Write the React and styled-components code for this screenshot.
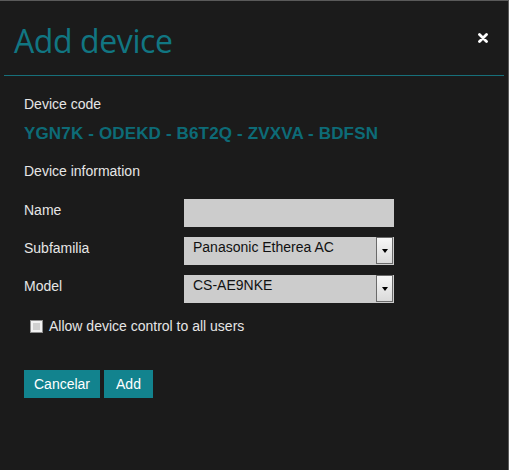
import React, { useState } from 'react'
import styled, { createGlobalStyle } from 'styled-components'

const GlobalStyle = createGlobalStyle`
    html, body {
        margin: 0;
        padding: 0;
        background: #1b1b1b;
    }
`

const Dialog = styled.div`
    box-sizing: border-box;
    width: 509px;
    height: 470px;
    background-color: #1b1b1b;
    border-top: 1px solid #5a5a5a;
    border-right: 1px solid #5a5a5a;
    font-family: "Liberation Sans", Arial, sans-serif;
    font-size: 14px;
    line-height: 20px;
    color: #e6e6e6;
`

const Header = styled.div`
    height: 74px;
    margin: 0 4px;
    padding: 0 16px 0 10px;
    display: flex;
    align-items: center;
    justify-content: space-between;
    border-bottom: 1px solid #17707a;
`

const Title = styled.h1`
    margin: 0;
    padding-top: 5px;
    font-family: "Open Sans", "Noto Sans", sans-serif;
    font-weight: 400;
    font-size: 32px;
    line-height: 40px;
    letter-spacing: -0.4px;
    color: #117682;
`

const Close = styled.button`
    width: 10px;
    height: 10px;
    padding: 0;
    border: 0;
    background: none;
    cursor: pointer;
    display: flex;

    svg {
        display: block;
    }
`

const Body = styled.div`
    padding: 18px 24px 0;
`

const SectionLabel = styled.div`
    margin-top: ${props => props.$top || 0}px;
    color: #e6e6e6;
`

const Code = styled.div`
    margin-top: 10px;
    font-size: 17px;
    font-weight: 700;
    letter-spacing: 0.15px;
    color: #0d6b77;
`

const Form = styled.div`
    margin-top: 18px;
    display: flex;
    flex-direction: column;
    gap: 10px;
`

const Row = styled.div`
    display: grid;
    grid-template-columns: 160px 210px;
    align-items: start;
`

const Label = styled.label`
    padding-top: 1px;
`

const Input = styled.input`
    box-sizing: border-box;
    width: 210px;
    height: 28px;
    margin: 0;
    padding: 0 8px;
    border: 0;
    outline: none;
    background: #cccccc;
    font-family: inherit;
    font-size: 14px;
    color: #111;
`

const Select = styled.div`
    box-sizing: border-box;
    width: 210px;
    height: 28px;
    display: flex;
    align-items: flex-start;
    background: #cccccc;
    color: #111;
    cursor: pointer;
`

const SelectValue = styled.span`
    flex: 1;
    padding-left: 9px;
    line-height: 20px;
`

const Arrow = styled.span`
    box-sizing: border-box;
    width: 17px;
    height: 27px;
    margin-right: 1px;
    display: flex;
    align-items: center;
    justify-content: center;
    border: 1px solid #6a6a6a;
    background: linear-gradient(#f7f7f7, #dadada);

    &::after {
        content: '';
        border-left: 3.5px solid transparent;
        border-right: 3.5px solid transparent;
        border-top: 4px solid #000;
    }
`

const CheckRow = styled.label`
    margin-top: 13px;
    padding-left: 6px;
    display: flex;
    align-items: center;
    gap: 6px;
    cursor: pointer;
`

const Box = styled.span`
    box-sizing: border-box;
    width: 13px;
    height: 13px;
    border: 1px solid #8e8e8e;
    background: ${props => (props.$checked ? '#117682' : '#d0d0d0')};
    box-shadow: inset 0 0 0 2px #f2f2f2;
`

const Buttons = styled.div`
    margin-top: 34px;
    display: flex;
    gap: 4px;
`

const Button = styled.button`
    height: 28px;
    padding: 0 ${props => props.$pad}px;
    border: 0;
    background-color: #12838e;
    color: #ffffff;
    font-family: "Liberation Sans", Arial, sans-serif;
    font-size: 14px;
    line-height: 28px;
    cursor: pointer;
`

const App = () => {
    const [name, setName] = useState('')
    const [shared, setShared] = useState(false)

    return (
        <>
            <GlobalStyle />
            <Dialog>
                <Header>
                    <Title>Add device</Title>
                    <Close aria-label="Close">
                        <svg width="10" height="10" viewBox="0 0 10 10">
                            <path d="M1.5 1.5 L8.5 8.5 M8.5 1.5 L1.5 8.5" stroke="#fff" strokeWidth="2.8" strokeLinecap="round" />
                        </svg>
                    </Close>
                </Header>
                <Body>
                    <SectionLabel>Device code</SectionLabel>
                    <Code>YGN7K - ODEKD - B6T2Q - ZVXVA - BDFSN</Code>
                    <SectionLabel $top={17}>Device information</SectionLabel>

                    <Form>
                        <Row>
                            <Label>Name</Label>
                            <Input value={name} onChange={e => setName(e.target.value)} />
                        </Row>
                        <Row>
                            <Label>Subfamilia</Label>
                            <Select>
                                <SelectValue>Panasonic Etherea AC</SelectValue>
                                <Arrow />
                            </Select>
                        </Row>
                        <Row>
                            <Label>Model</Label>
                            <Select>
                                <SelectValue>CS-AE9NKE</SelectValue>
                                <Arrow />
                            </Select>
                        </Row>
                    </Form>

                    <CheckRow onClick={() => setShared(!shared)}>
                        <Box $checked={shared} />
                        Allow device control to all users
                    </CheckRow>

                    <Buttons>
                        <Button $pad={10}>Cancelar</Button>
                        <Button $pad={12}>Add</Button>
                    </Buttons>
                </Body>
            </Dialog>
        </>
    )
}

export default App
